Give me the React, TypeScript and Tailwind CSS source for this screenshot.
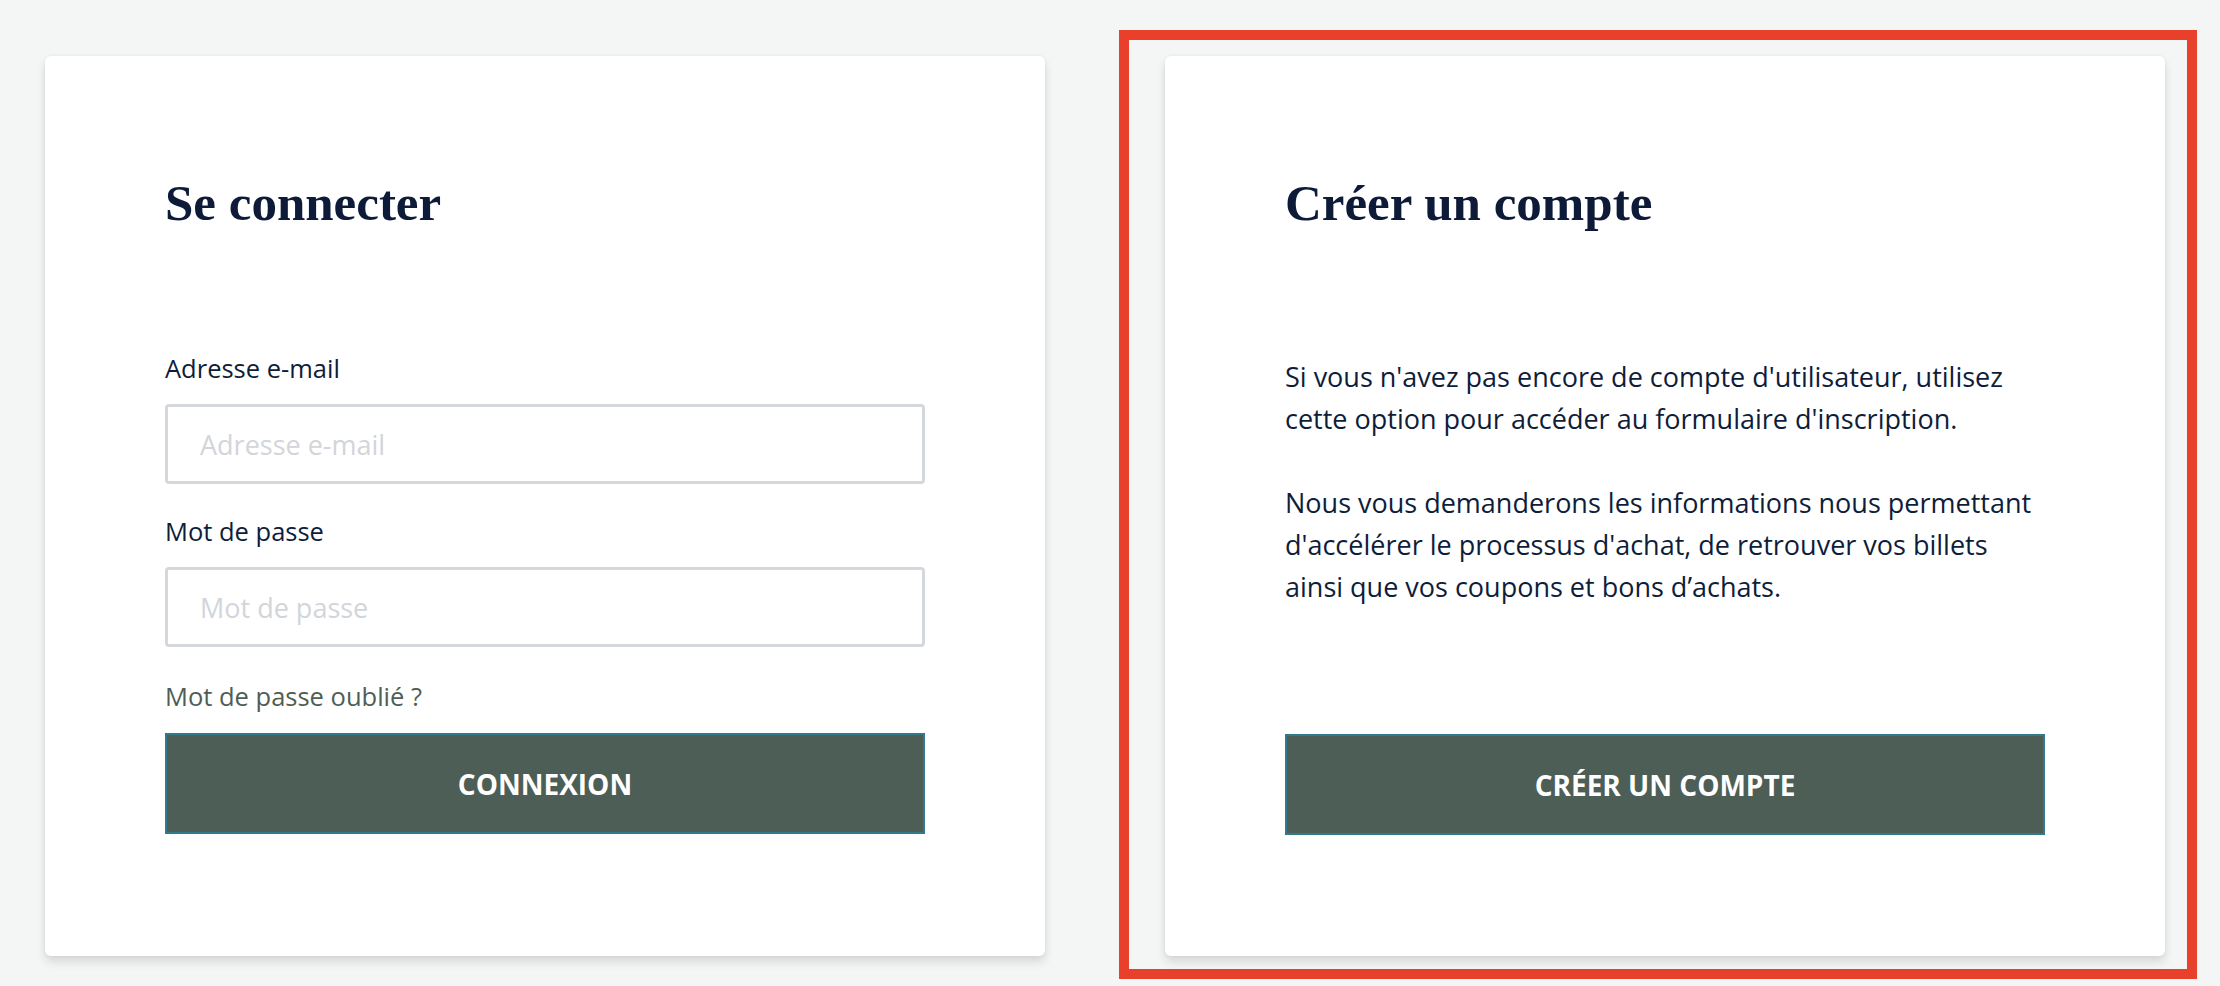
export default function App() {
  return (
    <main className="min-h-[986px] w-full bg-[#f4f5f5] font-['Open_Sans','Liberation_Sans',sans-serif] text-[#0e1d3a]">
      <div className="flex gap-[120px] pl-[45px] pt-[56px]">
        {/* Se connecter */}
        <section className="flex h-[900px] w-[1000px] flex-col rounded-[6px] bg-white px-[120px] pt-[118px] shadow-[0_6px_10px_rgba(0,0,0,0.12),0_0_4px_rgba(0,0,0,0.05)]">
          <h1 className="font-['Liberation_Serif',serif] text-[51px] leading-[58px] font-bold text-[#0d1b38]">
            Se connecter
          </h1>

          <label className="mt-[120px] block text-[25.5px] leading-[32px]">Adresse e-mail</label>
          <input
            type="email"
            placeholder="Adresse e-mail"
            className="mt-[20px] h-[80px] w-[760px] rounded-[4px] border-[3px] border-[#d4d7db] px-[32px] text-[27px] outline-none placeholder:text-[#d2d5da]"
          />

          <label className="mt-[31px] block text-[25.5px] leading-[32px]">Mot de passe</label>
          <input
            type="password"
            placeholder="Mot de passe"
            className="mt-[20px] h-[80px] w-[760px] rounded-[4px] border-[3px] border-[#d4d7db] px-[32px] text-[27px] outline-none placeholder:text-[#d2d5da]"
          />

          <a className="mt-[33px] block text-[25.5px] leading-[32px] text-[#4d5e56]">Mot de passe oublié ?</a>

          <button className="mt-[21px] h-[101px] w-[760px] border-2 border-[#2f7b8d] bg-[#4d5e56] text-[28px] font-bold text-white">
            CONNEXION
          </button>
        </section>

        {/* Créer un compte */}
        <div className="relative">
          <section className="flex h-[900px] w-[1000px] flex-col rounded-[6px] bg-white px-[120px] pt-[118px] shadow-[0_6px_10px_rgba(0,0,0,0.12),0_0_4px_rgba(0,0,0,0.05)]">
            <h1 className="font-['Liberation_Serif',serif] text-[51px] leading-[58px] font-bold text-[#0d1b38]">
              Créer un compte
            </h1>

            <p className="mt-[124px] text-[27px] leading-[42px]">
              Si vous n'avez pas encore de compte d'utilisateur, utilisez
              <br />
              cette option pour accéder au formulaire d'inscription.
            </p>
            <p className="mt-[42px] text-[27px] leading-[42px]">
              Nous vous demanderons les informations nous permettant
              <br />
              d'accélérer le processus d'achat, de retrouver vos billets
              <br />
              ainsi que vos coupons et bons d’achats.
            </p>

            <button className="mt-auto mb-[121px] h-[101px] w-[760px] border-2 border-[#2f7b8d] bg-[#4d5e56] text-[28px] font-bold text-white">
              CRÉER UN COMPTE
            </button>
          </section>
          <div className="pointer-events-none absolute top-[-26px] right-[-32px] bottom-[-23px] left-[-46px] border-[10px] border-[#e8402a]" />
        </div>
      </div>
    </main>
  );
}
